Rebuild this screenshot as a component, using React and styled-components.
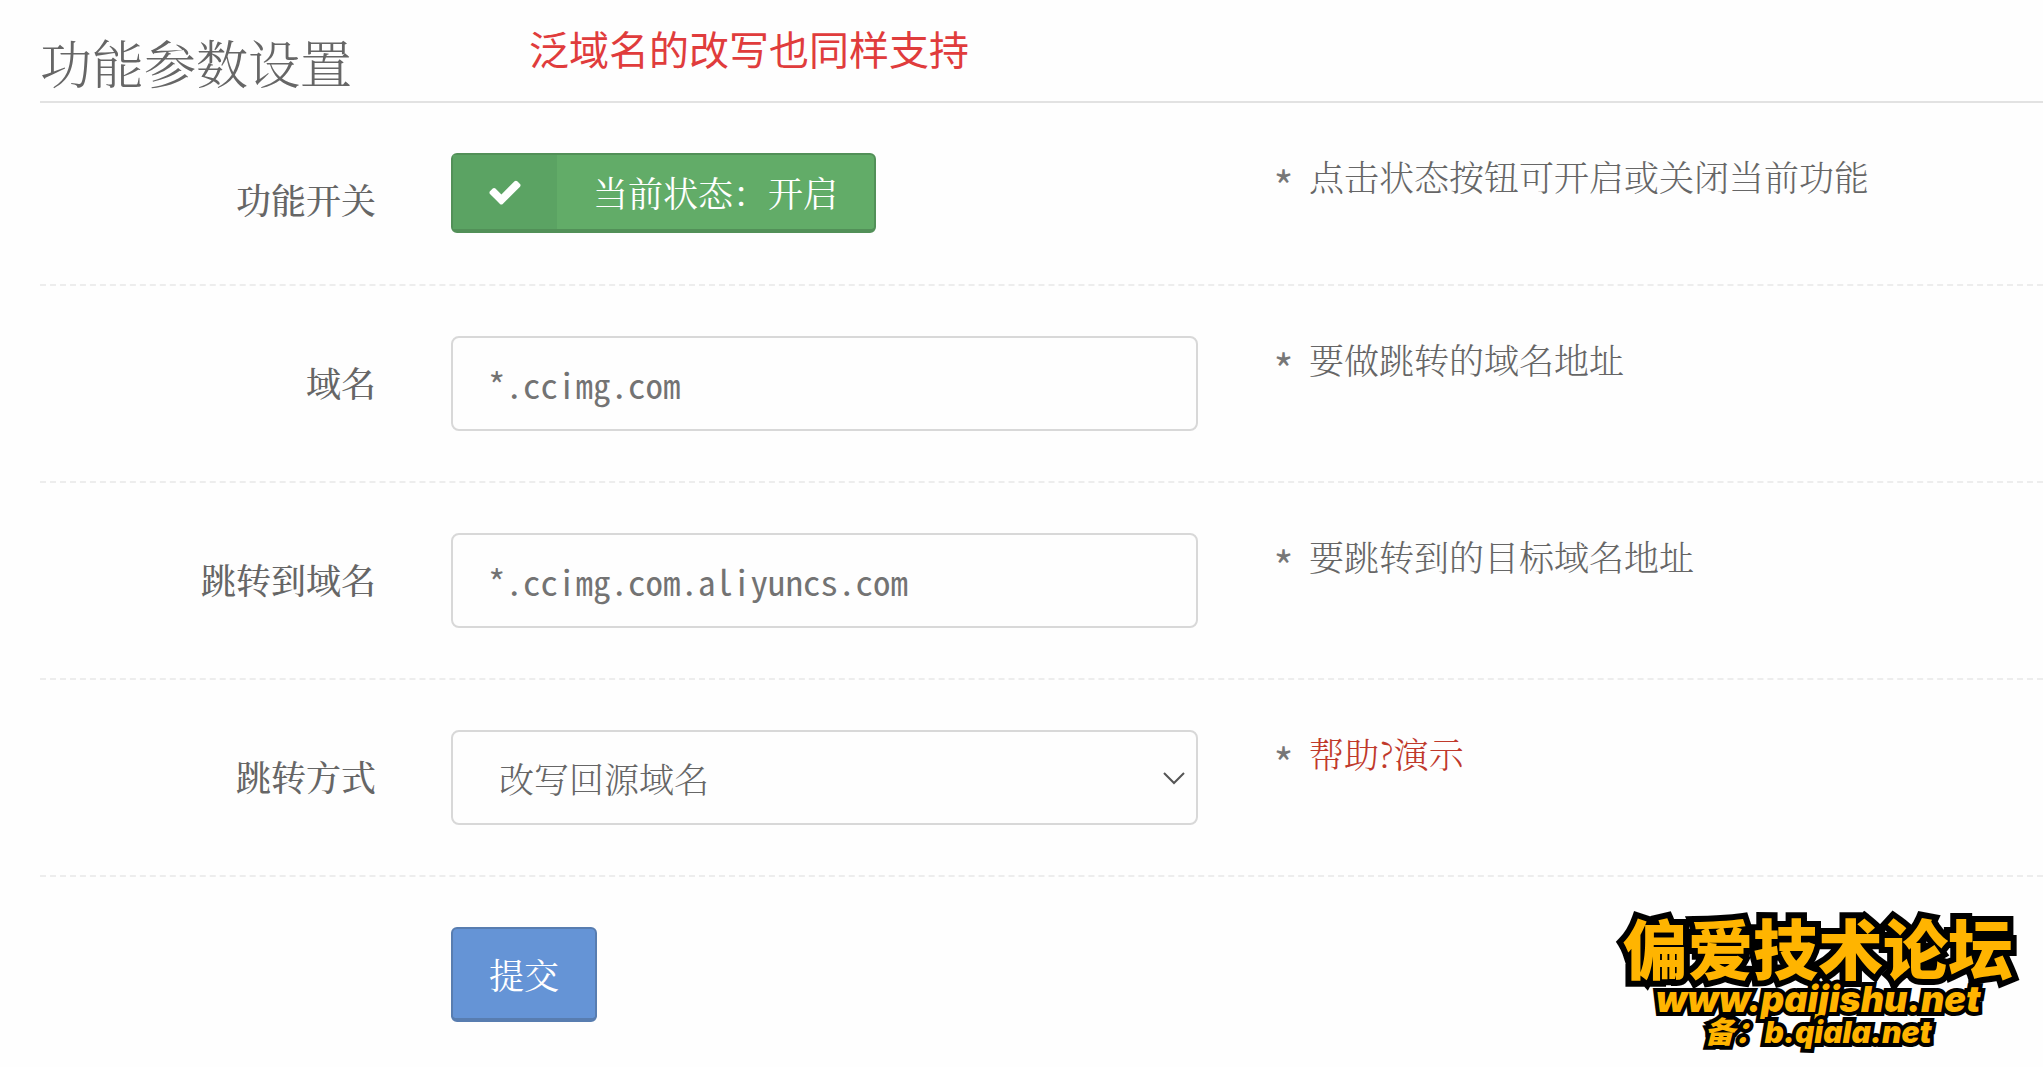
import React, { useState } from 'react';
import styled, { createGlobalStyle } from 'styled-components';

const cjkSerif = '"Noto Serif CJK SC", "Noto Sans CJK SC", serif';
const cjkSans = '"Noto Sans CJK SC", sans-serif';
const cjkMono = '"Noto Sans Mono CJK SC", "Liberation Mono", monospace';

const GlobalStyle = createGlobalStyle`
  *, *::before, *::after { box-sizing: border-box; }
  body {
    margin: 0;
    background: #fefefe;
    color: #666;
    font-family: ${cjkSerif};
    font-size: 35px;
    font-weight: 300;
    line-height: 48px;
  }
  button, input, select { font: inherit; color: inherit; margin: 0; }
`;

const Page = styled.main`
  position: relative;
  min-height: 100vh;
  padding: 22px 0 0 40px;
  overflow: hidden;
`;

const Header = styled.header`
  display: flex;
  align-items: flex-start;
  gap: 177px;
  border-bottom: 2px solid #e2e2e2;
`;

const Title = styled.h1`
  margin: 0;
  font-size: 52px;
  font-weight: 300;
  line-height: 79px;
`;

const Notice = styled.p`
  margin: 0;
  color: #e03c3c;
  font-family: ${cjkSans};
  font-size: 40px;
  font-weight: 400;
  line-height: 52px;
`;

const Row = styled.div`
  display: grid;
  grid-template-columns: 336fr 747fr 770fr;
  column-gap: 75px;
  align-items: start;
  min-height: 183px;
  padding: 50px 0;
  border-bottom: ${(p) => (p.$last ? '0' : '2px dashed #ededed')};
`;

const Label = styled.label`
  padding-top: 22px;
  text-align: right;
  font-weight: 500;
`;

const Control = styled.div`
  display: flex;
  grid-column: 2;
`;

const Button = styled.button`
  display: flex;
  align-items: stretch;
  padding: 0;
  border: 2px solid ${(p) => p.$edge};
  border-bottom-width: 4px;
  border-radius: 6px;
  background: ${(p) => p.$fill};
  color: #fff;
  height: ${(p) => p.$height};
  font-weight: 400;
  cursor: pointer;
`;

const ButtonIcon = styled.span`
  display: flex;
  align-items: center;
  justify-content: center;
  width: 104px;
  background: #5ba363;
`;

const ButtonText = styled.span`
  align-self: center;
  padding: 0 36px;
`;

const TextInput = styled.input`
  width: 100%;
  height: 95px;
  padding: 0 35px;
  border: 2px solid #d8d8d8;
  border-radius: 8px;
  background: #fefefe;
  color: #737373;
  font-family: ${cjkMono};
  outline: none;
`;

const SelectBox = styled.div`
  display: grid;
  width: 100%;
  align-items: center;

  > * { grid-area: 1 / 1; }
  > svg { justify-self: end; margin-right: 12px; pointer-events: none; }
`;

const Select = styled.select`
  appearance: none;
  width: 100%;
  height: 95px;
  padding: 0 46px;
  border: 2px solid #d8d8d8;
  border-radius: 8px;
  background: #fefefe;
  outline: none;
`;

const Help = styled.p`
  display: flex;
  gap: 15px;
  margin: 0;
  line-height: 46px;
`;

const Star = styled.span`
  color: #777;
  font-family: ${cjkMono};
  font-size: 42px;
  line-height: 64px;
`;

const HelpLink = styled.a`
  color: #c0392b;
  text-decoration: none;
`;

const Brand = styled.aside`
  position: absolute;
  right: 30px;
  bottom: 24px;
  display: flex;
  flex-direction: column;
  align-items: center;
  color: #ffb400;
  font-family: Inter, "Noto Sans CJK SC", sans-serif;
  font-style: italic;
  font-weight: 900;
  white-space: nowrap;
  -webkit-text-stroke: 8px #000;
  paint-order: stroke fill;
`;

const BrandName = styled.strong`
  font-family: ${cjkSans};
  font-size: 65px;
  font-style: oblique 6deg;
  font-weight: 900;
  line-height: 72px;
  -webkit-text-stroke-width: 12px;
`;

const BrandLine = styled.span`
  font-size: ${(p) => (p.$small ? '30px' : '36px')};
  line-height: ${(p) => (p.$small ? '32px' : '34px')};
`;

function CheckIcon() {
  return (
    <svg width="36" height="36" viewBox="0 0 1792 1792" fill="#fff" aria-hidden="true">
      <path d="M1671 566q0 40-28 68l-724 724-136 136q-28 28-68 28t-68-28l-136-136-362-362q-28-28-28-68t28-68l136-136q28-28 68-28t68 28l294 295 656-657q28-28 68-28t68 28l136 136q28 28 28 68z" />
    </svg>
  );
}

function ChevronIcon() {
  return (
    <svg width="24" height="14" viewBox="0 0 24 14" fill="none" stroke="#555" strokeWidth="2" aria-hidden="true">
      <path d="M2 2l10 10L22 2" />
    </svg>
  );
}

function HelpText({ children }) {
  return (
    <Help>
      <Star>*</Star>
      <span>{children}</span>
    </Help>
  );
}

export default function App() {
  const [enabled, setEnabled] = useState(true);
  const [domain, setDomain] = useState('*.ccimg.com');
  const [target, setTarget] = useState('*.ccimg.com.aliyuncs.com');

  return (
    <Page lang="zh-CN">
      <GlobalStyle />
      <Header>
        <Title>功能参数设置</Title>
        <Notice>泛域名的改写也同样支持</Notice>
      </Header>
      <form onSubmit={(e) => e.preventDefault()}>
        <Row>
          <Label htmlFor="toggle">功能开关</Label>
          <Control>
            <Button
              id="toggle"
              type="button"
              $fill="#62ac68"
              $edge="#529058"
              $height="80px"
              aria-pressed={enabled}
              onClick={() => setEnabled(!enabled)}
            >
              <ButtonIcon><CheckIcon /></ButtonIcon>
              <ButtonText>当前状态：{enabled ? '开启' : '关闭'}</ButtonText>
            </Button>
          </Control>
          <HelpText>点击状态按钮可开启或关闭当前功能</HelpText>
        </Row>
        <Row>
          <Label htmlFor="domain">域名</Label>
          <Control>
            <TextInput id="domain" value={domain} onChange={(e) => setDomain(e.target.value)} />
          </Control>
          <HelpText>要做跳转的域名地址</HelpText>
        </Row>
        <Row>
          <Label htmlFor="target">跳转到域名</Label>
          <Control>
            <TextInput id="target" value={target} onChange={(e) => setTarget(e.target.value)} />
          </Control>
          <HelpText>要跳转到的目标域名地址</HelpText>
        </Row>
        <Row>
          <Label htmlFor="mode">跳转方式</Label>
          <Control>
            <SelectBox>
              <Select id="mode">
                <option>改写回源域名</option>
              </Select>
              <ChevronIcon />
            </SelectBox>
          </Control>
          <HelpText><HelpLink href="#help">帮助?演示</HelpLink></HelpText>
        </Row>
        <Row $last>
          <Control>
            <Button type="submit" $fill="#6594d6" $edge="#587db0" $height="95px">
              <ButtonText>提交</ButtonText>
            </Button>
          </Control>
        </Row>
      </form>
      <Brand>
        <BrandName>偏爱技术论坛</BrandName>
        <BrandLine>www.paijishu.net</BrandLine>
        <BrandLine $small>备：b.qiala.net</BrandLine>
      </Brand>
    </Page>
  );
}
